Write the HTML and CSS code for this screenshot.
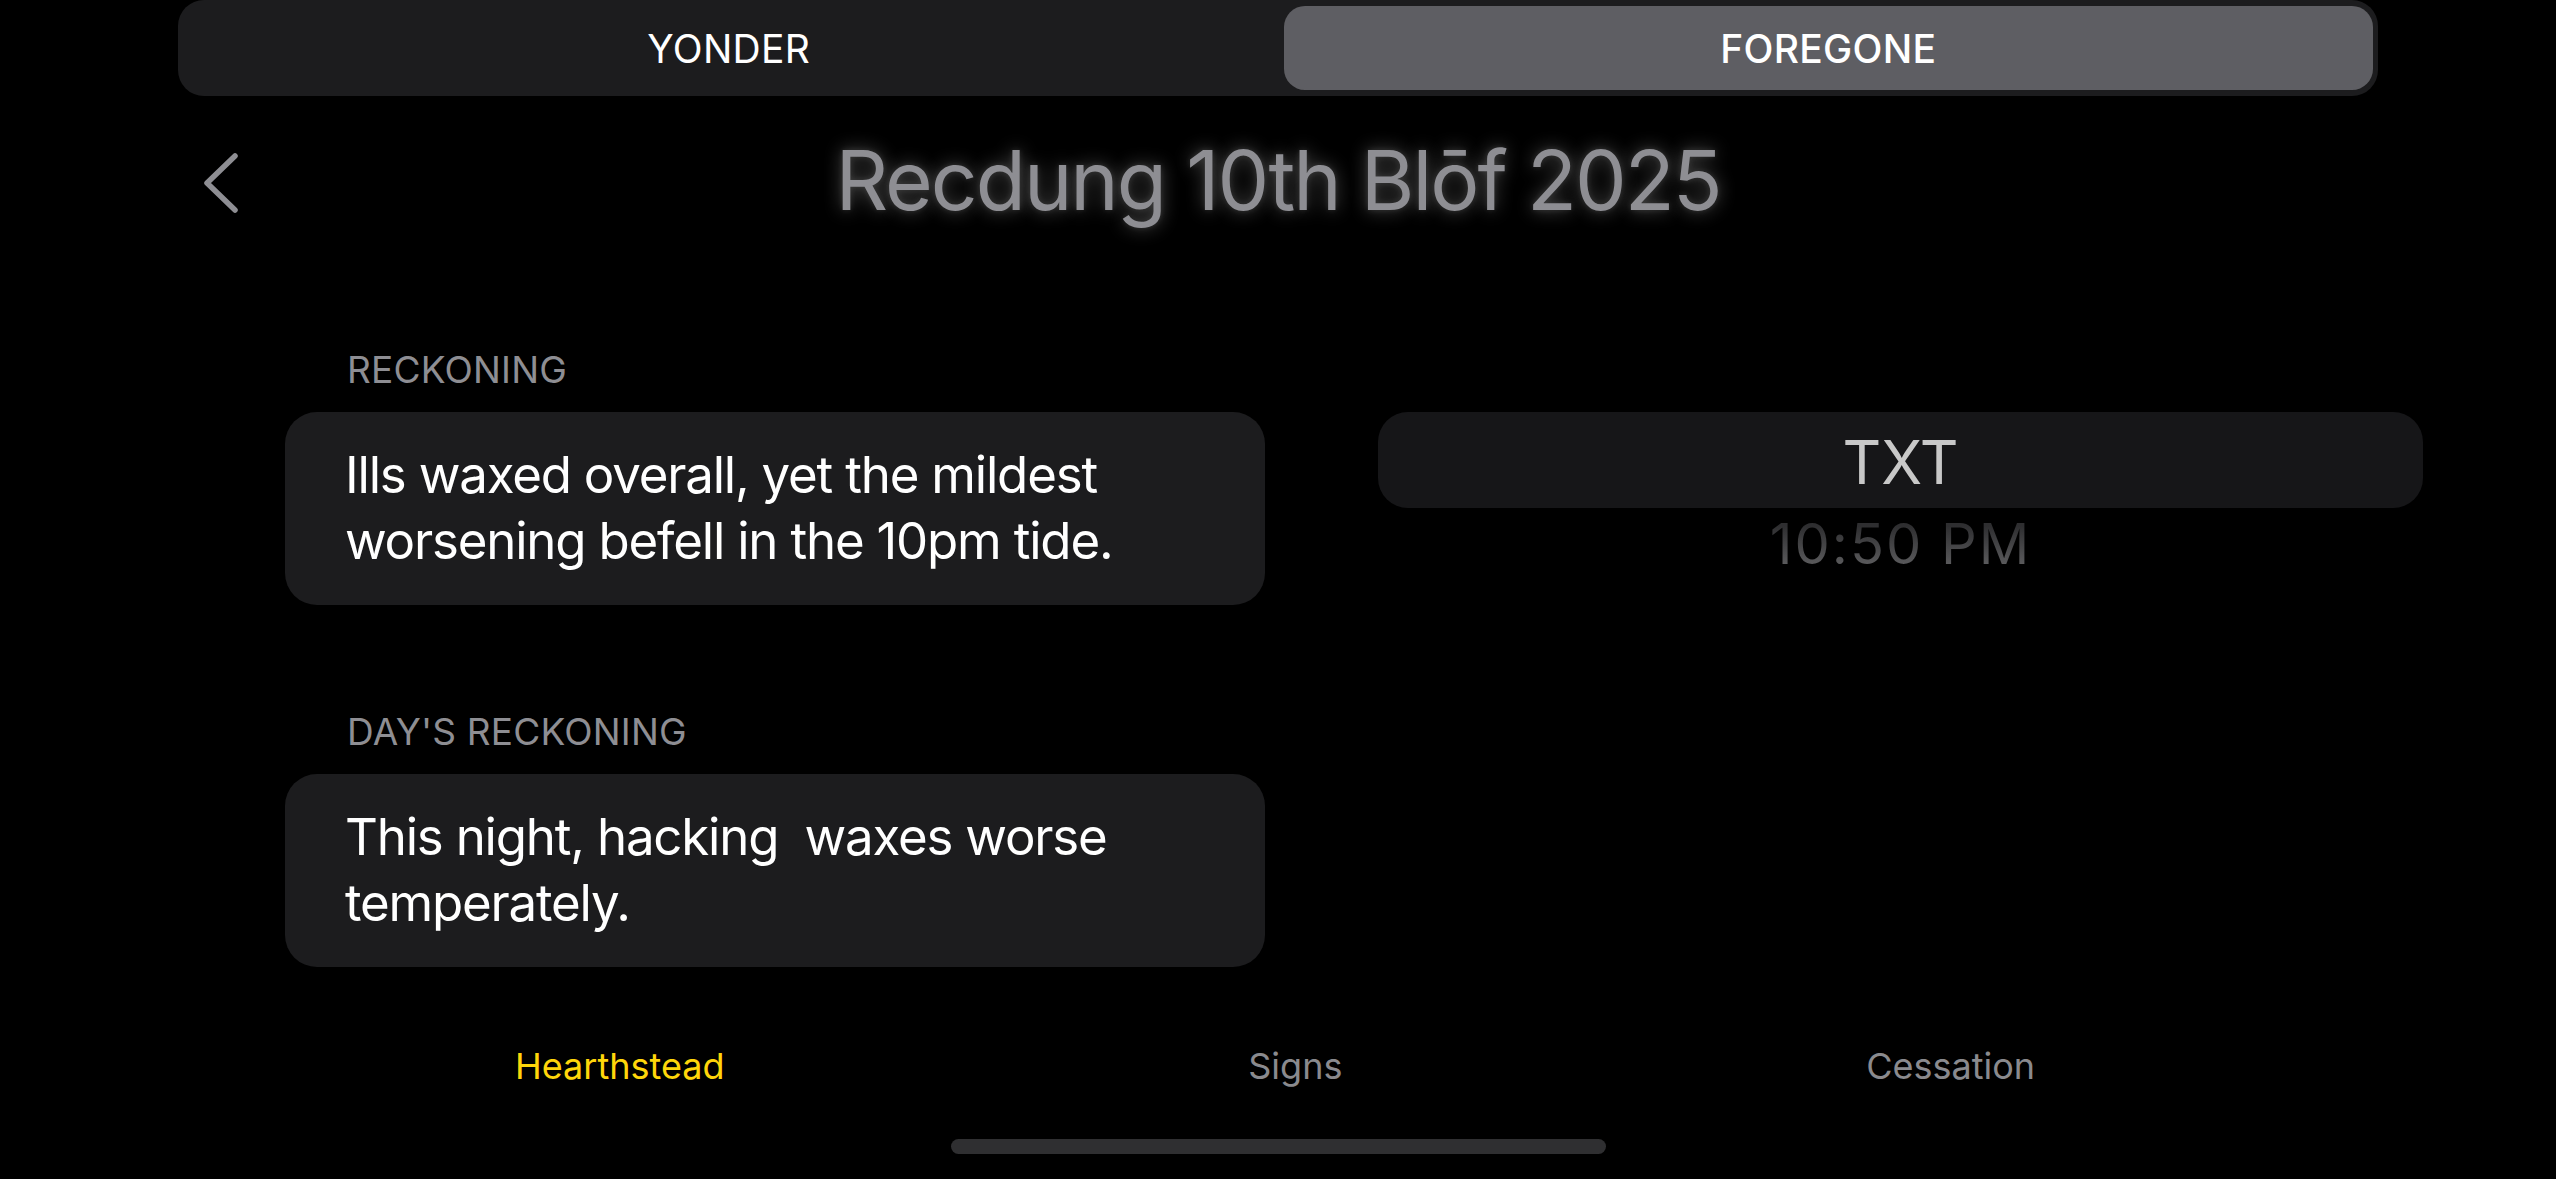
FILE: index.html
```html
<!DOCTYPE html>
<html lang="en">
<head>
<meta charset="utf-8">
<title>Recdung 10th Blōf 2025</title>
<link rel="stylesheet" href="styles.css">
</head>
<body>
<div class="screen">
  <div class="segmented">
    <div class="seg">YONDER</div>
    <div class="seg seg-active">FOREGONE</div>
  </div>

  <div class="nav">
    <svg class="back" width="44" height="64" viewBox="0 0 44 64">
      <polyline points="35,6 7,33 35,60" fill="none" stroke="#8e8e93" stroke-width="5.5" stroke-linecap="round" stroke-linejoin="round"/>
    </svg>
    <h1 class="title">Recdung 10th Blōf 2025</h1>
  </div>

  <div class="content">
    <div class="label label-1">RECKONING</div>
    <div class="card card-1">Ills waxed overall, yet the mildest worsening befell in the 10pm tide.</div>
    <div class="side">
      <div class="txt">TXT</div>
      <div class="time">10:50 PM</div>
    </div>
    <div class="label label-2">DAY'S RECKONING</div>
    <div class="card card-2">This night, hacking&nbsp; waxes worse temperately.</div>
  </div>

  <div class="tabs">
    <div class="tab tab-active">Hearthstead</div>
    <div class="tab">Signs</div>
    <div class="tab">Cessation</div>
  </div>

  <div class="home"></div>
</div>
</body>
</html>
```

FILE: styles.css
```css
* { box-sizing: border-box; }
html, body {
  margin: 0;
  padding: 0;
  background: #000;
}
body {
  width: 2556px;
  height: 1179px;
  overflow: hidden;
  font-family: Inter, "Liberation Sans", sans-serif;
  color: #fff;
}
.screen {
  display: flex;
  flex-direction: column;
  width: 2556px;
  height: 1179px;
}

/* segmented control */
.segmented {
  margin-left: 178px;
  width: 2200px;
  height: 96px;
  background: #1c1c1e;
  border-radius: 26px;
  padding: 6px 5px 6px 6px;
  display: flex;
  gap: 10px;
}
.seg {
  flex: 1;
  display: flex;
  align-items: center;
  justify-content: center;
  font-size: 39px;
  font-weight: 400;
  letter-spacing: 0.3px;
  color: #fff;
  border-radius: 21px;
}
.seg-active {
  background: #5e5e63;
  font-weight: 500;
}

/* nav */
.nav {
  position: relative;
  height: 100px;
  margin-top: 35px;
  display: flex;
  justify-content: center;
  align-items: center;
}
.back {
  position: absolute;
  left: 200px;
  top: 19px;
}
.title {
  margin: 0;
  font-size: 82px;
  line-height: 100px;
  font-weight: 400;
  letter-spacing: -2px;
  color: #8e8e93;
  text-shadow: 0 0 18px rgba(255, 255, 255, 0.32), 0 0 6px rgba(255, 255, 255, 0.12);
}

/* content */
.content {
  margin-top: 116px;
  margin-left: 285px;
  display: grid;
  grid-template-columns: 980px 1045px;
  column-gap: 113px;
  grid-template-areas:
    "l1 ."
    "c1 side"
    "l2 ."
    "c2 .";
  align-items: start;
}
.label {
  padding-left: 62px;
  font-size: 37px;
  line-height: 46px;
  color: #8e8e93;
  letter-spacing: 0.2px;
}
.label-1 { grid-area: l1; margin-bottom: 19px; }
.label-2 { grid-area: l2; margin-top: 104px; margin-bottom: 19px; }
.card {
  background: #1c1c1e;
  border-radius: 32px;
  padding: 30px 40px 31px 60px;
  font-size: 51px;
  line-height: 66px;
  letter-spacing: -1.2px;
  color: #fff;
}
.card-1 { grid-area: c1; }
.card-2 { grid-area: c2; }

.side {
  grid-area: side;
  display: flex;
  flex-direction: column;
  align-items: stretch;
}
.txt {
  height: 96px;
  background: #161618;
  border-radius: 30px;
  display: flex;
  align-items: center;
  justify-content: center;
  font-size: 60px;
  color: #c8c8c8;
  padding-top: 4px;
}
.time {
  margin-top: 6px;
  text-align: center;
  font-size: 56px;
  line-height: 60px;
  letter-spacing: 2px;
  background: linear-gradient(to bottom, #2e2e30 20%, #5e5e60 90%);
  -webkit-background-clip: text;
  background-clip: text;
  color: transparent;
  align-self: center;
}

/* tab bar */
.tabs {
  margin-top: 77px;
  margin-left: 515px;
  width: 1520px;
  display: flex;
  justify-content: space-between;
}
.tab {
  font-size: 36px;
  line-height: 44px;
  color: #8a8a8e;
}
.tab-active { color: #ffd60a; }

.home {
  margin-top: 51px;
  margin-left: 951px;
  width: 655px;
  height: 15px;
  border-radius: 8px;
  background: #2f2f31;
}
```
